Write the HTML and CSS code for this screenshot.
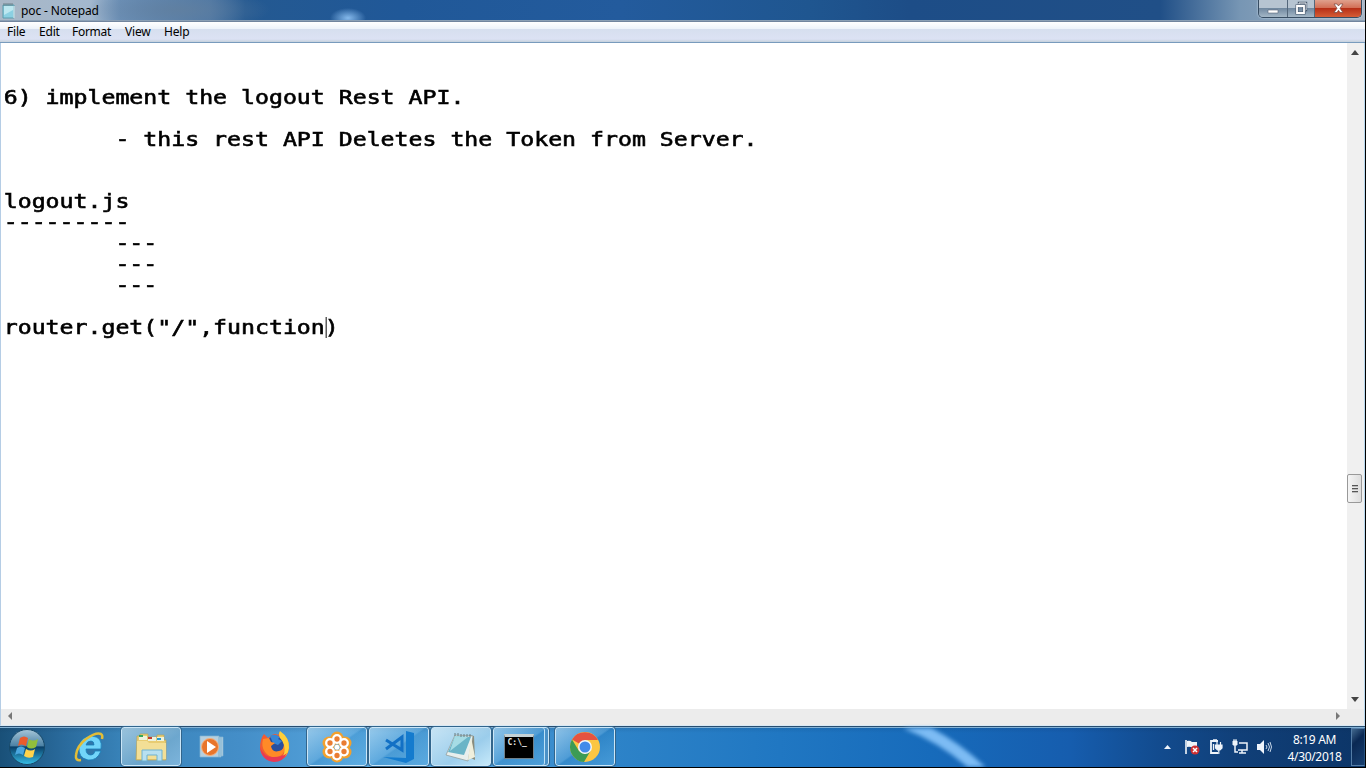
FILE: index.html
```html
<!DOCTYPE html>
<html lang="en">
<head>
<meta charset="utf-8">
<title>poc - Notepad</title>
<link rel="stylesheet" href="styles.css">
</head>
<body>
<div class="desktop">
  <header class="titlebar">
    <svg class="app-icon" width="14" height="17" viewBox="0 0 14 17"><path d="M1 3h11v13H1z" fill="#8bd0e2" stroke="#5a9cad"/><path d="M2 4h9v4L2 13z" fill="#bce7f0"/><path d="M12 4v12" stroke="#eef8fa"/><path d="M2 1v3M4 1v3M6 1v3M8 1v3M10 1v3" stroke="#60747b" stroke-width=".8"/></svg>
    <h1 class="title">poc - Notepad</h1>
    <div class="window-controls">
      <button class="control minimize" aria-label="Minimize"><svg width="12" height="14" viewBox="0 0 12 14"><path d="M1 9h10v3H1z" fill="#fff" stroke="#59677a" stroke-width=".6"/></svg></button>
      <button class="control restore" aria-label="Restore"><svg width="14" height="14" viewBox="0 0 14 14"><path d="M5 4V2h7v7h-2" fill="none" stroke="#46566a" stroke-width="2.4"/><path d="M5 4V2h7v7h-2" fill="none" stroke="#eff3f7"/><path d="M3 5h7v7H3z" fill="none" stroke="#46566a" stroke-width="3"/><path d="M3 5h7v7H3z" fill="none" stroke="#fff" stroke-width="1.8"/></svg></button>
      <button class="control close" aria-label="Close"><svg width="14" height="14" viewBox="0 0 14 14"><path d="M3 3h3l1.500 2L9 3h3L9 7.300l3 4.200H9L7.500 9.300 6 11.500H3l3-4.200z" fill="#fff" stroke="#75453f" stroke-width=".7"/></svg></button>
    </div>
  </header>
  <nav class="menubar"><span class="menu file">File</span><span class="menu edit">Edit</span><span class="menu format">Format</span><span class="menu view">View</span><span class="menu">Help</span></nav>
  <main class="workspace">
    <pre class="editor">


6) implement the logout Rest API.

        - this rest API Deletes the Token from Server.


logout.js
---------
        ---
        ---
        ---

router.get("/",function)</pre>
    <div class="vscroll">
      <svg width="8" height="5" viewBox="0 0 8 5"><path d="M0 5L4 0l4 5z" fill="#444"/></svg>
      <div class="thumb"><i></i><i></i><i></i></div>
      <svg width="8" height="5" viewBox="0 0 8 5"><path d="M0 0l4 5 4-5z" fill="#444"/></svg>
    </div>
  </main>
  <div class="hscroll">
    <svg width="4" height="8" viewBox="0 0 4 8"><path d="M4 0L0 4l4 4z" fill="#777"/></svg>
    <svg width="4" height="8" viewBox="0 0 4 8"><path d="M0 0l4 4-4 4z" fill="#777"/></svg>
  </div>
  <footer class="taskbar">
    <svg class="streak" width="130" height="39" viewBox="0 0 130 39"><path d="M24 -5Q65 11 99 43" fill="none" stroke="#7dbcf4" stroke-width="12"/></svg>
    <div class="task start"><svg width="38" height="38" viewBox="0 0 38 38"><defs><linearGradient id="orb" x2="0" y2="1"><stop stop-color="#a7c6d8"/><stop offset=".46" stop-color="#4d83a6"/><stop offset=".5" stop-color="#093f68"/><stop offset="1" stop-color="#37bfe8"/></linearGradient></defs><circle cx="19" cy="19" r="17.500" fill="url(#orb)" stroke="#174969"/><path d="M12 10Q16 7 20 10l-2 8Q13 15 10 18z" fill="#e95b2c"/><path d="M21 11Q25 14 30 11l-2 8Q23 22 19 19z" fill="#91bf3c"/><path d="M9 20Q13 17 17 20l-2 7Q11 24 7 27z" fill="#4aa7df"/><path d="M18 21Q23 24 27 21l-2 8Q20 31 16 28z" fill="#ffd34b"/></svg></div>
    <div class="task ie"><svg width="34" height="34" viewBox="0 0 34 34"><path d="M29 21Q25 31 16 30 6 28 7 17 9 6 20 6q11 1 9 13H14q0 6 5 6 3 0 4-4zM14 15h8q0-4-3-4-4 0-5 4z" fill="#72d5fa" stroke="#187db8" stroke-width=".8" fill-rule="evenodd"/><path d="M9 30Q3 31 4 25 5 16 14 9 24 2 29 4q2 1 1 5" fill="none" stroke="#e3bd37" stroke-width="2.500"/></svg></div>
    <div class="task open explorer"><svg width="34" height="32" viewBox="0 0 34 32"><path d="M3 5h3V3h8v3h9V4h7v5h2v20H2z" fill="#e8cc72" stroke="#b8a55d" stroke-width=".7"/><path d="M5 5h8v4H5zM14 6h8v4h-8zM23 6h7v4h-7z" fill="#eef2dc"/><path d="M5 4h4v2H5z" fill="#35a75b"/><path d="M14 6h4v2h-4z" fill="#c63c2e"/><path d="M23 7h4v2h-4z" fill="#269bd0"/><path d="M3 10h10l2 2h17v16H3z" fill="#f3df96"/><path d="M8 30V19h20v11h-5v-6H13v6z" fill="#b8e0f0" stroke="#6eb2d1"/></svg></div>
    <div class="task media"><svg width="26" height="28" viewBox="0 0 26 28"><path d="M2 3h19v21H2zM21 4h2v20h-2zM23 4h2v19h-2z" fill="#b5cfdf" stroke="#83b5d4" stroke-width=".7"/><circle cx="12" cy="14" r="8.500" fill="#e8752b" stroke="#f4b07d"/><path d="M9 8l9 6-9 6z" fill="#fff"/></svg></div>
    <div class="task"><svg width="34" height="34" viewBox="0 0 34 34"><path d="M6 4l4 4 4-3q3-2 6 0l2-3q9 6 9 15-1 14-15 14Q3 30 2 18q0-9 4-14" fill="#f15b32"/><circle cx="17" cy="15" r="9" fill="#294f9e"/><path d="M12 6q5-3 10 1l-2 2 4 2-4 4-5-2z" fill="#3686d6"/><path d="M5 9l6-1 2 4 4 1-4 3q1 7 8 5 5-1 5-7 3 8-4 12-9 4-15-4-4-5-2-13" fill="#ff8a27"/><path d="M22 1q10 7 9 17-1 8-8 11 5-6 3-14-1-4-4-7-2-4 0-7" fill="#ffcf38"/><path d="M2 17q4 11 14 10 9 0 13-4-4 9-13 9Q4 31 2 17" fill="#e83955"/></svg></div>
    <div class="task open"><svg width="32" height="32" viewBox="0 0 32 32"><g fill="#f2a12e"><circle cx="16" cy="7" r="6.500"/><circle cx="24" cy="12" r="6.500"/><circle cx="24" cy="21" r="6.500"/><circle cx="16" cy="25" r="6.500"/><circle cx="8" cy="21" r="6.500"/><circle cx="8" cy="12" r="6.500"/></g><g fill="#e97d32" stroke="#fff" stroke-width="2.300"><circle cx="16" cy="8" r="3.800"/><circle cx="23" cy="12" r="3.800"/><circle cx="23" cy="20.500" r="3.800"/><circle cx="16" cy="24.500" r="3.800"/><circle cx="9" cy="20.500" r="3.800"/><circle cx="9" cy="12" r="3.800"/></g><circle cx="16" cy="16.200" r="2.500" fill="#fff"/></svg></div>
    <div class="task open"><svg width="34" height="34" viewBox="0 0 34 34"><path d="M24 1l8 2v26l-8 4L1 27l23 1z" fill="#147bce"/><path d="M4 10L20 20V7L4 19" fill="none" stroke="#1270c5" stroke-width="3"/></svg></div>
    <div class="task open active"><svg width="36" height="34" viewBox="0 0 36 34"><path d="M26 5l5 1 1 24-8-4z" fill="#8a8c7c"/><path d="M12 5l18 1-5 25-22-6z" fill="#e8efed" stroke="#8c9692" stroke-width=".7"/><path d="M12 6l16 1-7 18L5 22z" fill="#6ab4c7"/><path d="M12 6l13 1L7 21z" fill="#a6dce5"/><path d="M28 7l4 20-7 3z" fill="#f0efdc"/><path d="M12 3v3M15 3v3M18 4v3M21 4v3M24 4v3M27 4v3" stroke="#687e83"/></svg></div>
    <div class="task open stack"><div class="terminal"><span>C:\_</span></div></div>
    <div class="task open chrome"><svg width="32" height="32" viewBox="0 0 32 32"><circle cx="16" cy="16" r="15" fill="#fbc642"/><path d="M16 16L3 8.500A15 15 0 0 1 29 9H16z" fill="#e65340"/><path d="M3 8.500A15 15 0 0 0 15 31l7-12-6 4-6-3z" fill="#3c9b55"/><circle cx="16" cy="16" r="7" fill="#f3f6fa"/><circle cx="16" cy="16" r="5.500" fill="#438bea"/></svg></div>
    <div class="tray">
      <svg width="7" height="4" viewBox="0 0 7 4"><path d="M0 4l3.500-4L7 4z" fill="#eef4fb"/></svg>
      <svg class="flag" width="16" height="16" viewBox="0 0 16 16"><path d="M2 1v14" stroke="#fff" stroke-width="1.500"/><path d="M3 2q3-1 5 1h5v6H9Q6 7 3 8z" fill="#edf3f9"/><circle cx="11" cy="11" r="4.500" fill="#cf3032"/><path d="M9 9l4 4M13 9l-4 4" stroke="#fff" stroke-width="1.500"/></svg>
      <svg class="power" width="15" height="16" viewBox="0 0 15 16"><path d="M9 2H2v12h7" fill="none" stroke="#eef4fa" stroke-width="1.800"/><path d="M4 1h4M4.500 5v6" stroke="#eef4fa" stroke-width="1.300"/><path d="M8 3v4M11.500 3v4M6.500 6H13v3l-2 2H8.500l-2-2zM9.800 11v4" fill="#eef4fa" stroke="#eef4fa" stroke-width="1.200"/></svg>
      <svg class="network" width="17" height="16" viewBox="0 0 17 16"><path d="M7 4h8v7H6M7 14h7M10 11v3M3 6v7h3" fill="none" stroke="#edf4fa" stroke-width="1.500"/><path d="M1 2h4v4H1zM2 0v2M4 0v2" fill="#edf4fa" stroke="#edf4fa"/></svg>
      <svg class="sound" width="16" height="16" viewBox="0 0 16 16"><path d="M1 5h3l4-4v14l-4-4H1z" fill="#eff5fc"/><path d="M10 6q2 2 0 4M12 4q3 4 0 8M14 3q3 5 0 10" stroke="#c8d8e9" fill="none"/></svg>
      <div class="clock"><span class="time">8:19 AM</span><span class="date">4/30/2018</span></div>
      <div class="show-desktop"></div>
    </div>
  </footer>
</div>
</body>
</html>
```
FILE: styles.css
```css
* { box-sizing: border-box; }
body { margin: 0; overflow: hidden; font-family: "Noto Sans", sans-serif; }
.desktop { width: 1366px; height: 768px; display: flex; flex-direction: column; border-right: 1px solid #000; border-bottom: 1px solid #000; overflow: hidden; }
.titlebar { height: 22px; flex: none; display: flex; border-bottom: 1px solid #71859e; padding-left: 2px; background: radial-gradient(ellipse 18px 10px at 348px 18px, #85b9ec, transparent), radial-gradient(ellipse 92px 22px at 178px 10px, #617f9ecc, transparent), linear-gradient(90deg, #a9b7c6 0, #a3b8ce 90px, #6d91b8 120px, #4e78a6 210px, #245991 245px, #205898 400px, #235b9d 620px, #1f5690 810px, #1d4d87 910px, #204f87 1160px, #7796b4 1240px, #a8b5c4); box-shadow: inset 0 -1px #8ba0b5; }
.app-icon { margin-top: 2px; }
.title { margin: 0 0 0 5px; font-size: 12px; line-height: 22px; font-weight: 400; letter-spacing: -.13px; }
.window-controls { width: 104px; height: 18px; margin-left: auto; margin-right: 3px; display: flex; border: 1px solid #374d63; border-top: 0; border-radius: 0 0 5px 5px; overflow: hidden; box-shadow: 0 0 2px #d9e7f2; }
.control { width: 27px; padding: 1px 0 0; border: 0; border-right: 1px solid #53677b; background: linear-gradient(#b6c4d1 0 45%, #7189a0 50%, #a4b7c7); display: flex; align-items: flex-start; justify-content: center; }
.minimize { width: 29px; }
.close { flex: 1; border-right: 0; background: linear-gradient(#dfa18d 0, #d37057 45%, #b73017 50%, #d65d36); }
.menubar { height: 21px; flex: none; display: flex; padding: 1px 0 0 7px; line-height: 18px; font-size: 12px; letter-spacing: -.2px; border-bottom: 1px solid #789bbd; background: linear-gradient(#fff 0, #edf3fa 34%, #d6dfef 35%, #dce2f4 85%, #c5d1dc); }
.file { width: 32px; } .edit { width: 33px; } .format { width: 53px; letter-spacing: -.3px; } .view { width: 39px; }
.workspace { height: 666px; display: flex; border-left: 1px solid #b5cde5; border-right: 1px solid #b9d9ef; background: #fff; }
.editor { position: relative; width: 1130px; margin: 0; padding: 2.800px 0 0 2.300px; font-family: "DejaVu Sans Mono", monospace; font-size: 19.500px; line-height: 20.930px; color: #000; -webkit-text-stroke: .6px #000; transform: scaleX(1.189); transform-origin: 0 0; }
/* Insertion point before the closing parenthesis */
.editor::after { content: ""; position: absolute; left: 272.500px; top: 274px; width: .9px; height: 21px; background: #333; }
.vscroll { margin-left: auto; width: 17px; display: flex; flex-direction: column; align-items: center; padding: 7px 2px 7px 0; background: #f0f0f0; }
.thumb { width: 15px; height: 29px; margin-top: 419px; margin-bottom: auto; display: flex; flex-direction: column; align-items: center; justify-content: center; gap: 2px; border: 1px solid #999; border-radius: 2px; background: linear-gradient(90deg, #f5f5f5, #ddd); }
.thumb i { width: 6px; height: 1px; background: #555; box-shadow: 0 1px #bbb; }
.hscroll { height: 17px; padding: 0 24px 2px 7px; display: flex; align-items: center; justify-content: space-between; border-left: 1px solid #b5cde5; border-right: 1px solid #b9d9ef; border-bottom: 1px solid #d9e9f5; background: #ececec; }
.taskbar { position: relative; height: 41px; flex: none; display: flex; border-top: 1px solid #274d70; box-shadow: inset 0 1px #83b1d4; background: linear-gradient(180deg, #0a254522, transparent 15%), linear-gradient(90deg, #195078 0, #2a6b9d 65px, #3984ba 125px, #448ec8 240px, #55a4dc 350px, #4d9bd5 460px, #2d83c8 615px, #2077c2 780px, #176bbb 930px, #165dae 1070px, #124b8e 1160px, #103f78 1240px, #0c3567); }
.streak { position: absolute; left: 882px; top: 1px; filter: blur(2px); }
.task { width: 62px; height: 40px; display: flex; align-items: center; justify-content: center; }
.start { width: 58px; padding-right: 5px; }
.media { padding-right: 4px; }
.open { width: 60px; height: 39px; margin: 0 1px; border: 1px solid #cbe6f7; border-radius: 3px; outline: 1px solid #32658c; background: linear-gradient(145deg, #b7ddf4aa, #73b7e566 48%, #2d88c533 51%, #6cbced66); }
.active { background: linear-gradient(145deg, #d9eff9dd, #b9e0f4bb 60%, #c6e9fa); }
.explorer { background: linear-gradient(145deg, #bddae9bb, #8cbbd799 60%, #a6d1ed99); }
.stack { width: 56px; margin-right: 5px; padding-right: 5px; box-shadow: inset -3px 0 #4a91c7, inset -4px 0 #bce1f7; }
.chrome { padding-right: 1px; }
.terminal { width: 30px; height: 25px; padding: 1px 3px; border: 1px solid #70818c; border-top: 3px solid #c5d2d6; background: #000; color: #e8e8e8; font: bold 8px/9px "DejaVu Sans Mono", monospace; }
.tray { margin-left: auto; display: flex; align-items: center; color: #fff; }
.flag { margin-left: 13px; }
.power { margin-left: 9px; }
.network { margin-left: 8px; }
.sound { margin-left: 7px; }
.clock { width: 66px; display: flex; flex-direction: column; align-items: center; font-size: 12px; line-height: 17px; padding: 1px 0 0 9px; white-space: nowrap; letter-spacing: -.32px; margin-left: 5px; }
.show-desktop { width: 14px; height: 38px; margin-left: 8px; border: 1px solid #537ca6; border-right-color: #27527f; background: linear-gradient(135deg, #42698e, #0a2853 35%, #173f70); }
```
